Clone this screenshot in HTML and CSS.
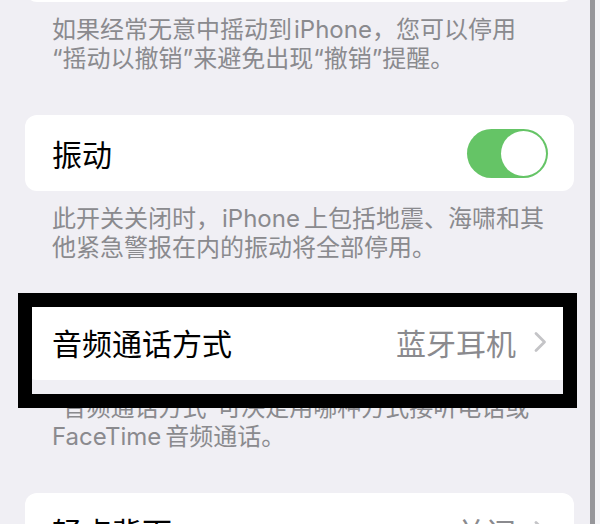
FILE: index.html
```html
<!DOCTYPE html>
<html lang="zh-CN">
<head>
    <meta charset="UTF-8">
    <meta name="viewport" content="width=device-width, initial-scale=1.0">
    <title>声音与触感</title>
    <link rel="stylesheet" href="styles.css">
</head>
<body>
    <div class="screen">
        <div class="card card-top">
            <span class="title">摇动以撤销</span>
            <span class="toggle on"><span class="knob"></span></span>
        </div>
        <p class="note">如果经常无意中摇动到<span class="latin">iPhone</span>，您可以停用“摇动以撤销”来避免出现“撤销”提醒。</p>

        <div class="card">
            <span class="title">振动</span>
            <span class="toggle on"><span class="knob"></span></span>
        </div>
        <p class="note">此开关关闭时，<span class="latin gap-after">iPhone</span>上包括地震、海啸和其他紧急警报在内的振动将全部停用。</p>

        <div class="card marked">
            <span class="title">音频通话方式</span>
            <span class="value">蓝牙耳机</span>
            <svg class="chevron" width="15" height="22" viewBox="0 0 15 22">
                <path d="M3 2.5 L11.5 11 L3 19.5" fill="none" stroke="#c4c4c7" stroke-width="2.8" stroke-linecap="round" stroke-linejoin="round"/>
            </svg>
            <div class="mark"></div>
        </div>
        <p class="note">“音频通话方式”可决定用哪种方式接听电话或<span class="gap-after">FaceTime</span>音频通话。</p>

        <div class="card">
            <span class="title">轻点背面</span>
            <span class="value">关闭</span>
            <svg class="chevron" width="15" height="22" viewBox="0 0 15 22">
                <path d="M3 2.5 L11.5 11 L3 19.5" fill="none" stroke="#c4c4c7" stroke-width="2.8" stroke-linecap="round" stroke-linejoin="round"/>
            </svg>
        </div>
    </div>
    <div class="edge"></div>
    <div class="edge-rest"></div>
</body>
</html>
```

FILE: styles.css
```css
body {
    margin: 0;
    height: 524px;
    overflow: hidden;
    display: flex;
    background-color: #f0eff4;
    font-family: "Inter", "Noto Sans CJK SC", sans-serif;
}
.screen {
    width: 549px;
    padding: 0 16px 0 25px;
    display: flex;
    flex-direction: column;
}
.card {
    position: relative;
    flex: none;
    height: 76px;
    padding: 0 26px 0 27px;
    background-color: #fff;
    border-radius: 12px;
    display: flex;
    align-items: center;
}
/* only the bottom edge of this one shows */
.card-top {
    margin-top: -74px;
}
.title {
    flex: 1;
    font-size: 30px;
    color: #000;
}
.value {
    font-size: 30px;
    color: #8a8a8e;
    margin-right: 17px;
}
.chevron {
    display: block;
}
.note {
    margin: 13px 0 42px 0;
    padding: 0 28px 0 27px;
    font-size: 24px;
    line-height: 29px;
    color: #8a8a8e;
}
/* latin words get a little air next to the han characters */
.latin {
    margin-left: 2px;
}
.gap-after {
    margin-right: 4px;
}
.toggle {
    width: 81px;
    height: 49px;
    border-radius: 25px;
    background-color: #65c466;
    position: relative;
}
.toggle .knob {
    position: absolute;
    top: 2px;
    right: 2px;
    width: 45px;
    height: 45px;
    border-radius: 50%;
    background-color: #fff;
}
.mark {
    position: absolute;
    left: -7px;
    top: -11px;
    right: -3px;
    bottom: -28px;
    border: 14px solid #000;
}
.edge {
    width: 5px;
    background-color: #97979b;
}
.edge-rest {
    flex: 1;
    background-color: #f5f5f8;
}
```
